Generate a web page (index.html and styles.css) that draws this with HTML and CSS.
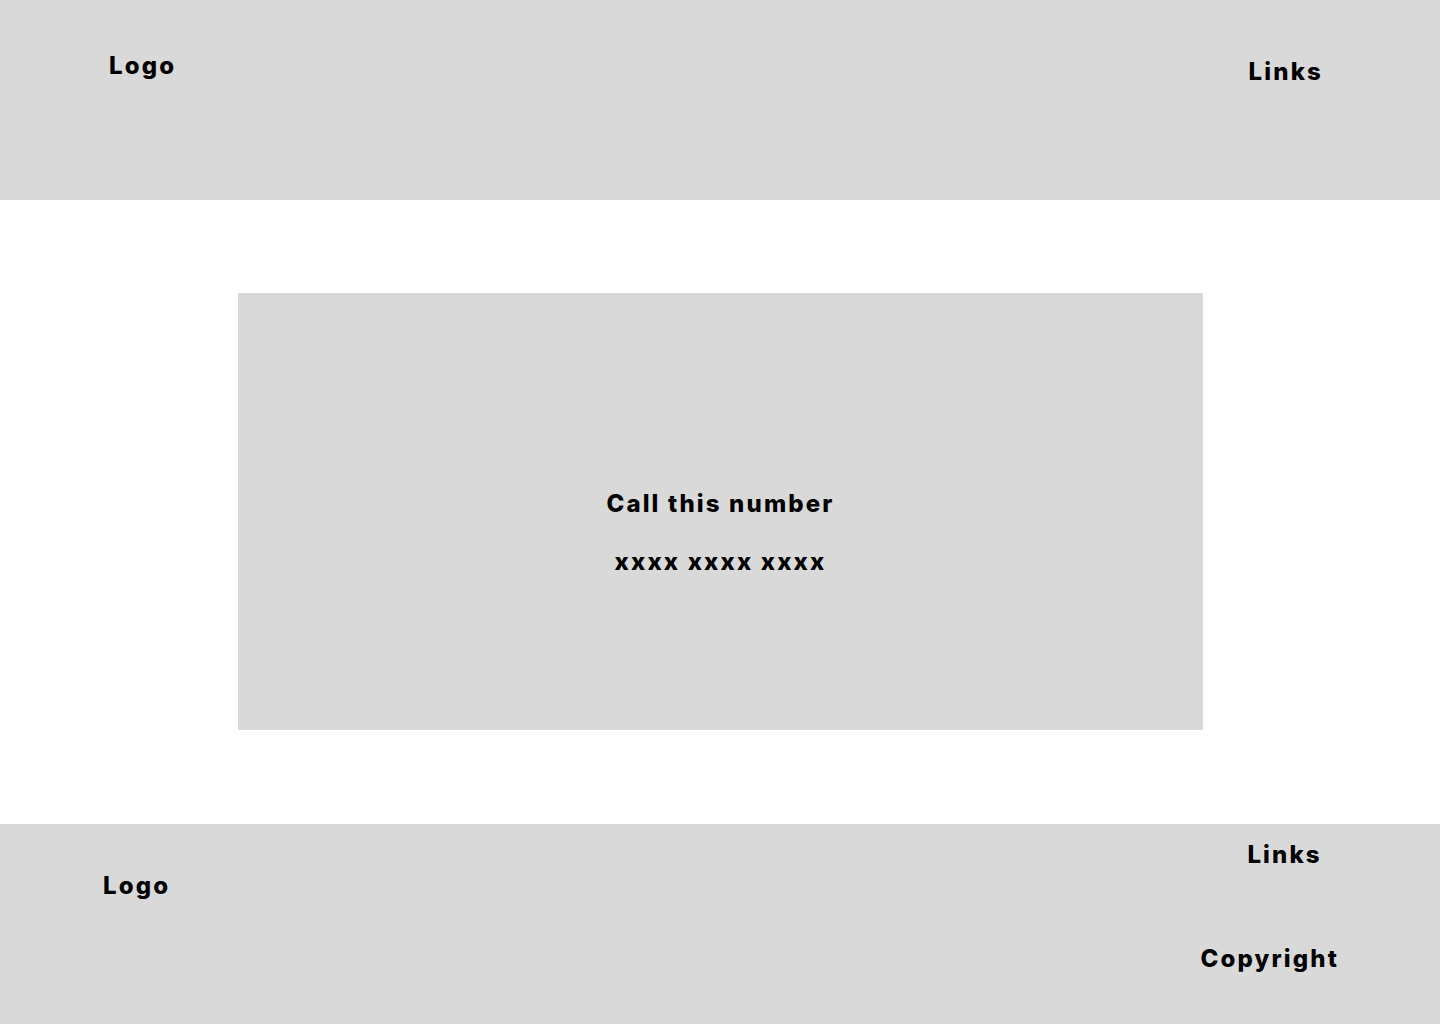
FILE: index.html
```html
<!DOCTYPE html>
<html lang="en">
<head>
<meta charset="utf-8">
<title>Call this number</title>
<link rel="stylesheet" href="styles.css">
</head>
<body>
<header class="site-header">
  <div class="brand">Logo</div>
  <nav class="nav">Links</nav>
</header>
<main class="main">
  <section class="call-box">
    <h1 class="call-title">Call this number</h1>
    <p class="call-number">xxxx xxxx xxxx</p>
  </section>
</main>
<footer class="site-footer">
  <div class="footer-brand">Logo</div>
  <div class="footer-right">
    <nav class="footer-links">Links</nav>
    <div class="copyright">Copyright</div>
  </div>
</footer>
</body>
</html>
```
FILE: styles.css
```css
* { box-sizing: border-box; }
html, body { margin: 0; padding: 0; }
body {
  width: 1440px;
  height: 1024px;
  background: #ffffff;
  color: #000;
  font-family: Inter, "Liberation Sans", sans-serif;
  font-weight: 800;
  font-size: 24px;
  line-height: 24px;
  letter-spacing: 0.09em;
  display: flex;
  flex-direction: column;
}
.site-header {
  height: 200px;
  background: #d9d9d9;
  display: flex;
  justify-content: space-between;
  align-items: flex-start;
  padding: 0 117px 0 109px;
}
.brand { margin-top: 54px; }
.nav { margin-top: 60px; }
.main {
  flex: 1;
  display: flex;
  align-items: flex-start;
  justify-content: center;
}
.call-box {
  width: 965px;
  height: 437px;
  background: #d9d9d9;
  display: flex;
  flex-direction: column;
  align-items: center;
  justify-content: flex-start;
  padding-top: 199px;
  margin: 93px 0 0 1px;
}
.call-title {
  margin: 0;
  font: inherit;
}
.call-number {
  margin: 34px 0 0;
}
.site-footer {
  height: 200px;
  background: #d9d9d9;
  display: flex;
  justify-content: space-between;
  align-items: flex-start;
  padding: 0 101px 0 103px;
}
.footer-brand { margin-top: 50px; }
.footer-right {
  display: flex;
  flex-direction: column;
  align-items: flex-start;
}
.footer-links { margin: 19px 0 0 47px; }
.copyright { margin-top: 80px; }
```
